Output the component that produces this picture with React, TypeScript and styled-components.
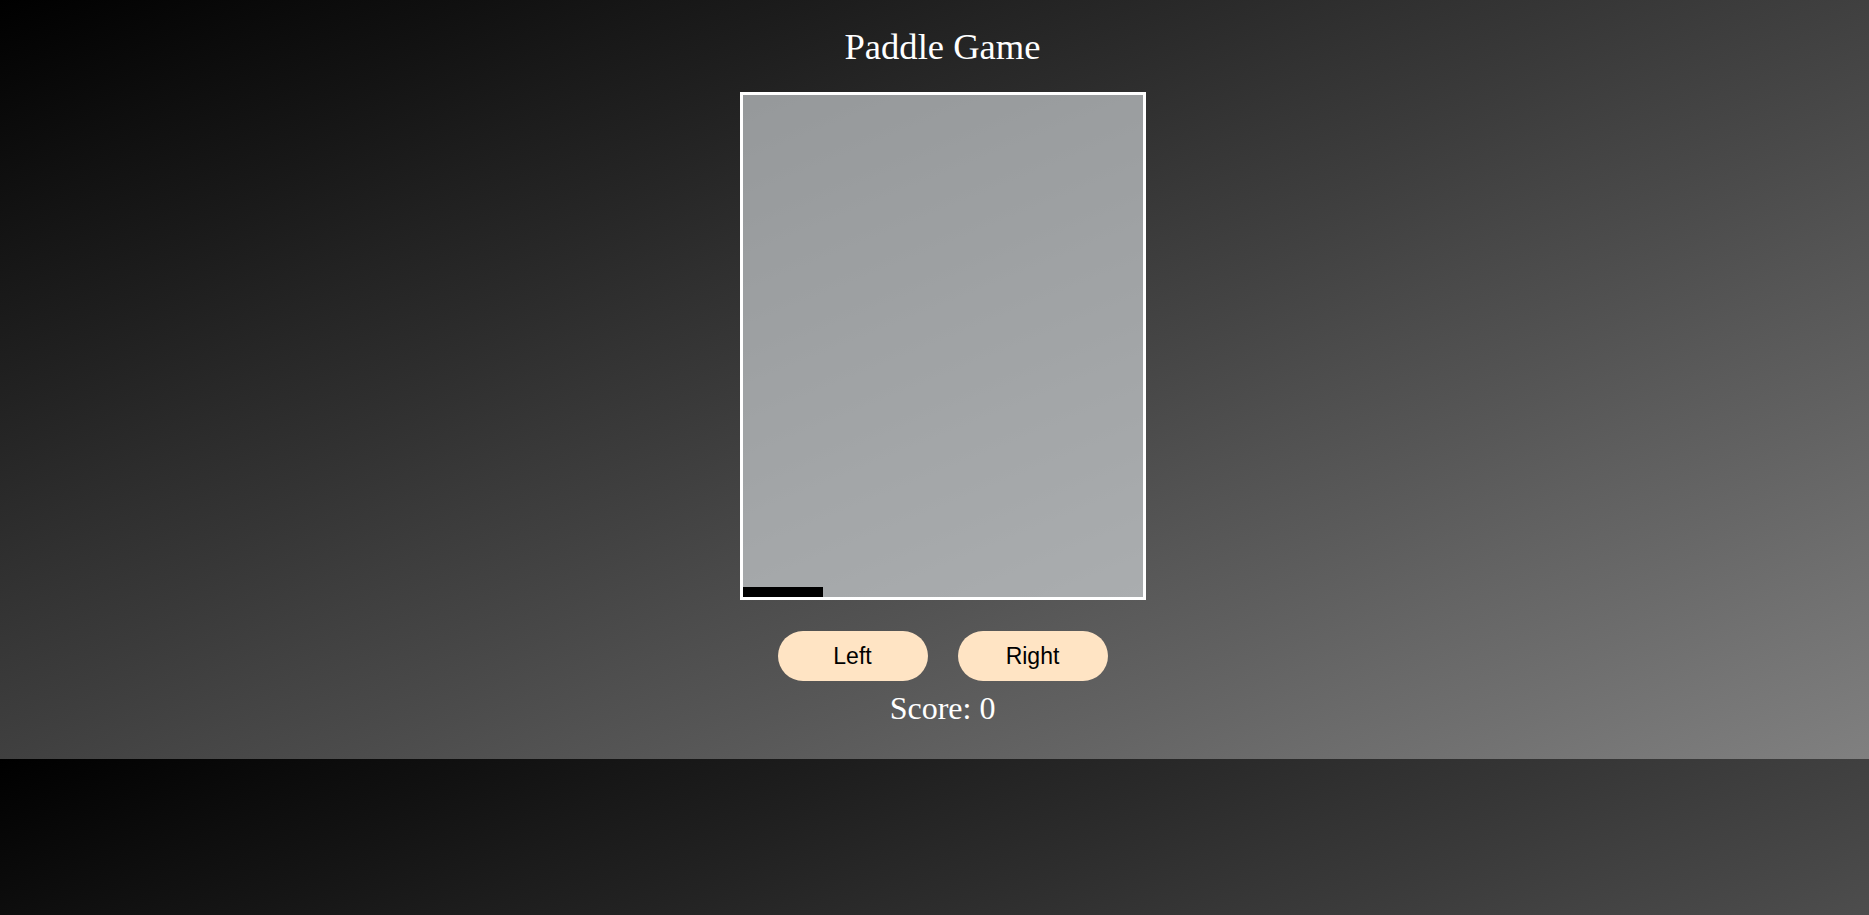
import React from "react";
import styled, { createGlobalStyle } from "styled-components";

const GlobalStyle = createGlobalStyle`
  html, body {
    margin: 0;
    padding: 0;
  }
  body {
    background: linear-gradient(to bottom right, #000000, #808080);
    background-size: 100% 759px;
    background-repeat: repeat;
    min-height: 915px;
    font-family: "Liberation Serif", "Times New Roman", serif;
  }
`;

const Page = styled.main`
  box-sizing: border-box;
  width: 100%;
  height: 759px;
  padding: 27px 0 0 16px;
  display: flex;
  flex-direction: column;
  align-items: center;
`;

const Title = styled.h1`
  margin: 0;
  font-family: "Liberation Serif", "Times New Roman", serif;
  font-weight: 400;
  font-size: 36.6px;
  line-height: 40px;
  color: #ffffff;
`;

const Court = styled.div`
  position: relative;
  margin-top: 25px;
  width: 400px;
  height: 502px;
  border: 3px solid #ffffff;
  background: rgba(216, 220, 224, 0.64);
`;

const Paddle = styled.div`
  position: absolute;
  left: 0;
  bottom: 0;
  width: 80px;
  height: 10px;
  background: #000000;
`;

const Controls = styled.div`
  margin-top: 31px;
  display: flex;
  gap: 30px;
`;

const ControlButton = styled.button`
  width: 150px;
  height: 50px;
  border: none;
  border-radius: 25px;
  background: #ffe4c4;
  color: #000000;
  font-family: "Liberation Sans", Arial, sans-serif;
  font-size: 23px;
  padding: 0;
  cursor: pointer;
`;

const Score = styled.div`
  margin-top: 9px;
  font-family: "Liberation Serif", "Times New Roman", serif;
  font-size: 32px;
  line-height: 36px;
  color: #ffffff;
`;

export default function App() {
  const paddleX = 0;
  return (
    <>
      <GlobalStyle />
      <Page>
        <Title>Paddle Game</Title>
        <Court>
          <Paddle style={{ left: paddleX }} />
        </Court>
        <Controls>
          <ControlButton>Left</ControlButton>
          <ControlButton>Right</ControlButton>
        </Controls>
        <Score>Score: 0</Score>
      </Page>
    </>
  );
}
